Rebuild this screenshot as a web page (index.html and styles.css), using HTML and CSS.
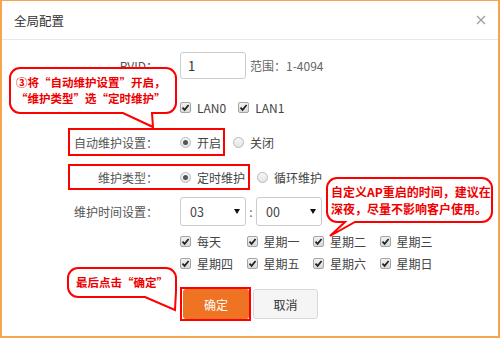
FILE: index.html
```html
<!DOCTYPE html>
<html lang="zh-CN">
<head>
<meta charset="utf-8">
<title>全局配置</title>
<link rel="stylesheet" href="styles.css">
</head>
<body>
<div class="dialog">
  <div class="header">
    <span class="title">全局配置</span>
    <svg class="close" width="10" height="10" viewBox="0 0 10 10"><path d="M1 1 L9 9 M9 1 L1 9" stroke="#a0a0a0" stroke-width="1.3" fill="none"/></svg>
  </div>
  <div class="form">
    <div class="row row-pvid">
      <span class="lbl">PVID：</span>
      <div class="ctl"><input class="txt" type="text" value="1"><span class="hint">范围：1-4094</span></div>
    </div>
    <div class="row row-lan">
      <span class="lbl"></span>
      <div class="ctl">
        <span class="opt"><span class="cb"><svg width="9" height="9" viewBox="0 0 9 9"><path d="M1.5 4.6 L3.6 6.9 L7.6 2" stroke="#222" stroke-width="1.7" fill="none"/></svg></span>LAN0</span>
        <span class="opt"><span class="cb"><svg width="9" height="9" viewBox="0 0 9 9"><path d="M1.5 4.6 L3.6 6.9 L7.6 2" stroke="#222" stroke-width="1.7" fill="none"/></svg></span>LAN1</span>
      </div>
    </div>
    <div class="row row-auto">
      <span class="lbl">自动维护设置：</span>
      <div class="ctl">
        <span class="opt"><span class="rd on"></span>开启</span>
        <span class="opt"><span class="rd"></span>关闭</span>
      </div>
    </div>
    <div class="row row-type">
      <span class="lbl">维护类型：</span>
      <div class="ctl">
        <span class="opt"><span class="rd on"></span>定时维护</span>
        <span class="opt"><span class="rd"></span>循环维护</span>
      </div>
    </div>
    <div class="row row-time">
      <span class="lbl">维护时间设置：</span>
      <div class="ctl">
        <span class="sel">03</span><span class="colon">:</span><span class="sel">00</span>
      </div>
    </div>
    <div class="row row-week">
      <span class="lbl"></span>
      <div class="week">
        <span class="opt"><span class="cb"><svg width="9" height="9" viewBox="0 0 9 9"><path d="M1.5 4.6 L3.6 6.9 L7.6 2" stroke="#222" stroke-width="1.7" fill="none"/></svg></span>每天</span>
        <span class="opt"><span class="cb"><svg width="9" height="9" viewBox="0 0 9 9"><path d="M1.5 4.6 L3.6 6.9 L7.6 2" stroke="#222" stroke-width="1.7" fill="none"/></svg></span>星期一</span>
        <span class="opt"><span class="cb"><svg width="9" height="9" viewBox="0 0 9 9"><path d="M1.5 4.6 L3.6 6.9 L7.6 2" stroke="#222" stroke-width="1.7" fill="none"/></svg></span>星期二</span>
        <span class="opt"><span class="cb"><svg width="9" height="9" viewBox="0 0 9 9"><path d="M1.5 4.6 L3.6 6.9 L7.6 2" stroke="#222" stroke-width="1.7" fill="none"/></svg></span>星期三</span>
      </div>
    </div>
    <div class="row row-week2">
      <span class="lbl"></span>
      <div class="week">
        <span class="opt"><span class="cb"><svg width="9" height="9" viewBox="0 0 9 9"><path d="M1.5 4.6 L3.6 6.9 L7.6 2" stroke="#222" stroke-width="1.7" fill="none"/></svg></span>星期四</span>
        <span class="opt"><span class="cb"><svg width="9" height="9" viewBox="0 0 9 9"><path d="M1.5 4.6 L3.6 6.9 L7.6 2" stroke="#222" stroke-width="1.7" fill="none"/></svg></span>星期五</span>
        <span class="opt"><span class="cb"><svg width="9" height="9" viewBox="0 0 9 9"><path d="M1.5 4.6 L3.6 6.9 L7.6 2" stroke="#222" stroke-width="1.7" fill="none"/></svg></span>星期六</span>
        <span class="opt"><span class="cb"><svg width="9" height="9" viewBox="0 0 9 9"><path d="M1.5 4.6 L3.6 6.9 L7.6 2" stroke="#222" stroke-width="1.7" fill="none"/></svg></span>星期日</span>
      </div>
    </div>
    <div class="row row-btn">
      <span class="lbl"></span>
      <div class="ctl">
        <button class="btn ok" type="button">确定</button>
        <button class="btn cancel" type="button">取消</button>
      </div>
    </div>
  </div>

  <div class="mark mark-auto"></div>
  <div class="mark mark-type"></div>
  <div class="mark mark-ok"></div>

  <div class="callout callout-1">
    <svg class="bubble" width="169" height="62" viewBox="0 0 169 62"><path d="M11 1 H157 A10 10 0 0 1 167 11 V36 A10 10 0 0 1 157 46 H143 L144 60 L114 46 H11 A10 10 0 0 1 1 36 V11 A10 10 0 0 1 11 1 Z" fill="#fff" stroke="#f00" stroke-width="2"/></svg>
    <div class="ctext">③将“自动维护设置”开启，<br>“维护类型”选“定时维护”</div>
  </div>
  <div class="callout callout-2">
    <svg class="bubble" width="168" height="61" viewBox="0 0 168 61"><path d="M11 1 H156 A10 10 0 0 1 166 11 V35 A10 10 0 0 1 156 45 H29 L4 59 L19 45 H11 A10 10 0 0 1 1 35 V11 A10 10 0 0 1 11 1 Z" fill="#fff" stroke="#f00" stroke-width="2"/></svg>
    <div class="ctext">自定义AP重启的时间，建议在<br>深夜，尽量不影响客户使用。</div>
  </div>
  <div class="callout callout-3">
    <svg class="bubble" width="112" height="46" viewBox="0 0 112 46"><path d="M11 1 H99 A10 10 0 0 1 109 11 V24 L108 43 L78 30 H11 A10 10 0 0 1 1 20 V11 A10 10 0 0 1 11 1 Z" fill="#fff" stroke="#f00" stroke-width="2"/></svg>
    <div class="ctext">最后点击“确定”</div>
  </div>
</div>
</body>
</html>
```
FILE: styles.css
```css
* { box-sizing: border-box; }
body {
  margin: 0;
  background: #fff;
  font-family: "Noto Sans CJK SC", "Noto Sans", sans-serif;
  font-size: 12px;
  color: #555;
}
.dialog {
  position: relative;
  width: 500px;
  height: 338px;
  border: 2px solid #f5a54e;
  border-top-width: 1px;
  background: #fff;
  overflow: hidden;
}
.header {
  height: 39px;
  border-bottom: 1px solid #e8e8e8;
  display: flex;
  align-items: center;
  justify-content: space-between;
  padding: 0 12px 0 12px;
}
.title { font-size: 12.5px; color: #333; }
.close { display: block; }

.form { padding-top: 12px; }
.row {
  display: grid;
  grid-template-columns: 156px auto;
  column-gap: 22px;
  align-items: center;
}
.lbl { text-align: right; color: #555; white-space: nowrap; }
.ctl { display: flex; align-items: center; }

.row-pvid { height: 27px; }
.row-lan { height: 26px; margin-top: 15px; }
.row-auto { height: 28px; margin-top: 8px; }
.row-type { height: 26px; margin-top: 8px; }
.row-time { height: 29px; margin-top: 7px; }
.row-week { height: 20px; margin-top: 5px; }
.row-week2 { height: 20px; margin-top: 2px; }
.row-btn { height: 30px; margin-top: 16px; }

.txt {
  width: 66px;
  height: 27px;
  border: 1px solid #ccc;
  border-radius: 3px;
  padding: 0 7px;
  font: inherit;
  font-size: 13px;
  color: #333;
  outline: none;
}
.hint { margin-left: 4px; color: #666; }

.opt { display: inline-flex; align-items: center; gap: 6px; color: #444; white-space: nowrap; }
.ctl .opt + .opt { margin-left: 12px; }

.cb {
  width: 11px;
  height: 11px;
  border: 1px solid #a5a5a5;
  border-radius: 2px;
  background: linear-gradient(#f2f2f2, #d9d9d9);
  display: inline-flex;
  align-items: center;
  justify-content: center;
  flex: none;
}
.cb svg { display: block; }
.rd {
  width: 11px;
  height: 11px;
  border-radius: 50%;
  border: 1px solid #b8b8b8;
  background: linear-gradient(#f7f7f7, #e4e4e4);
  display: inline-flex;
  align-items: center;
  justify-content: center;
  flex: none;
}
.rd.on::after {
  content: "";
  width: 5px;
  height: 5px;
  border-radius: 50%;
  background: #555;
}

.sel {
  width: 66px;
  height: 29px;
  border: 1px solid #ccc;
  border-radius: 3px;
  display: flex;
  align-items: center;
  justify-content: space-between;
  padding: 0 5px 0 9px;
  color: #444;
  font-size: 12.5px;
}
.sel::after {
  content: "";
  border-left: 3px solid transparent;
  border-right: 3px solid transparent;
  border-top: 5px solid #111;
}
.colon { width: 10px; text-align: center; color: #666; }

.week { display: grid; grid-template-columns: repeat(4, 66.5px); }

.btn {
  height: 30px;
  border-radius: 3px;
  font: inherit;
  font-size: 12px;
  cursor: pointer;
}
.ok {
  width: 66px;
  margin-left: 3px;
  background: #ee7322;
  color: #fff;
  border: none;
}
.cancel {
  width: 65px;
  margin-left: 4px;
  background: #f5f5f5;
  border: 1px solid #d9d9d9;
  color: #333;
}

.mark { position: absolute; border: 2px solid #f00; }
.mark-auto { left: 66px; top: 127px; width: 157px; height: 28px; }
.mark-type { left: 66px; top: 163px; width: 182px; height: 26px; }
.mark-ok { left: 178px; top: 286px; width: 71px; height: 34px; }

.callout { position: absolute; }
.callout .bubble { position: absolute; left: 0; top: 0; }
.ctext {
  position: relative;
  color: #ee0000;
  font-weight: bold;
  white-space: nowrap;
}
.callout-1 { left: 7px; top: 66px; width: 169px; height: 62px; }
.callout-1 .ctext { padding: 7px 0 0 7px; font-size: 11.5px; line-height: 16px; }
.callout-2 { left: 324px; top: 176px; width: 168px; height: 61px; }
.callout-2 .ctext { padding: 6px 0 0 5px; font-size: 12px; line-height: 17px; }
.callout-3 { left: 65px; top: 266px; width: 112px; height: 46px; }
.callout-3 .ctext { padding: 7px 0 0 9px; font-size: 11.5px; line-height: 16px; }
```
